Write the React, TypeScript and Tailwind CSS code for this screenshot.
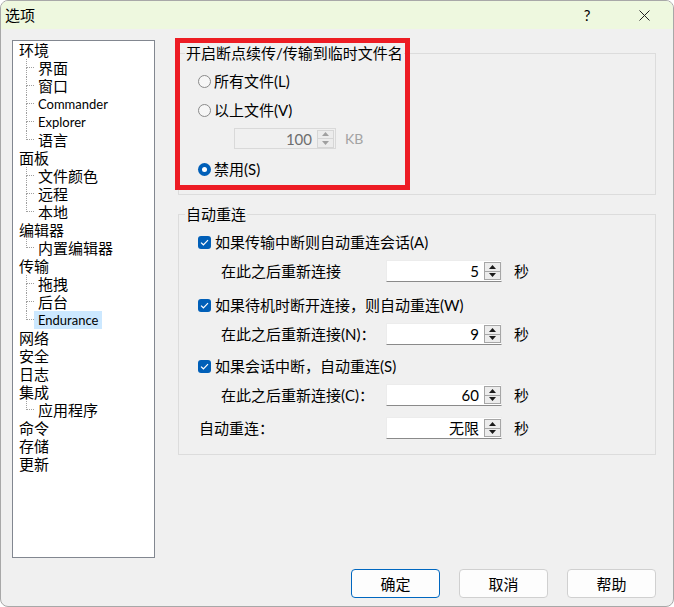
import React from "react";

type Node = { t: string; c?: string[] };

const tree: Node[] = [
  { t: "环境", c: ["界面", "窗口", "Commander", "Explorer", "语言"] },
  { t: "面板", c: ["文件颜色", "远程", "本地"] },
  { t: "编辑器", c: ["内置编辑器"] },
  { t: "传输", c: ["拖拽", "后台", "Endurance"] },
  { t: "网络" },
  { t: "安全" },
  { t: "日志" },
  { t: "集成", c: ["应用程序"] },
  { t: "命令" },
  { t: "存储" },
  { t: "更新" },
];

const latin = new Set(["Commander", "Explorer", "Endurance"]);

function Spinner({ disabled }: { disabled?: boolean }) {
  const border = disabled ? "border-[#d6d6d6]" : "border-[#a6a6a6]";
  const fill = disabled ? "#a0a0a0" : "#1a1a1a";
  return (
    <div className={`w-[17px] h-[18px] flex flex-col border ${border} bg-[#ececec]`}>
      <div className={`flex-1 flex items-center justify-center border-b ${border}`}>
        <svg width="7" height="4" viewBox="0 0 7 4">
          <path d="M0 4 L3.5 0 L7 4 Z" fill={fill} />
        </svg>
      </div>
      <div className="flex-1 flex items-center justify-center">
        <svg width="7" height="4" viewBox="0 0 7 4">
          <path d="M0 0 L7 0 L3.5 4 Z" fill={fill} />
        </svg>
      </div>
    </div>
  );
}

function Radio({ checked, label }: { checked?: boolean; label: string }) {
  return (
    <div className="h-[20px] flex items-center pl-[19px] gap-[3px]">
      {checked ? (
        <div className="w-[13px] h-[13px] rounded-full bg-[#005fb8] flex items-center justify-center">
          <div className="w-[5px] h-[5px] rounded-full bg-white" />
        </div>
      ) : (
        <div className="w-[13px] h-[13px] rounded-full border border-[#8a8a8a] bg-[#f6f6f6]" />
      )}
      <span>{label}</span>
    </div>
  );
}

function Check({ label }: { label: string }) {
  return (
    <div className="h-[20px] flex items-center pl-[19px] gap-[4px]">
      <div className="w-[13px] h-[13px] rounded-[3px] bg-[#005fb8] flex items-center justify-center">
        <svg width="9" height="7" viewBox="0 0 9 7">
          <path d="M1 3.6 L3.4 5.8 L8 1.2" stroke="white" strokeWidth="1.2" fill="none" />
        </svg>
      </div>
      <span>{label}</span>
    </div>
  );
}

function NumRow({ label, value, indent }: { label: string; value: string; indent: "deep" | "shallow" }) {
  return (
    <div className="h-[22px] flex items-center">
      <div className={`w-[207px] ${indent === "deep" ? "pl-[42px]" : "pl-[20px]"}`}>{label}</div>
      <div className="w-[116px] h-[22px] bg-white border border-[#ececec] border-b-[#8a8a8a] flex items-center justify-end">
        <span className="mr-[5px]">{value}</span>
        <Spinner />
      </div>
      <span className="ml-[12px]">秒</span>
    </div>
  );
}

function Tree() {
  const rows: React.ReactNode[] = [];
  tree.forEach((n) => {
    rows.push(
      <div key={n.t} className="h-[18px] flex items-center pl-[6px] leading-[18px]">
        {n.t}
      </div>
    );
    n.c?.forEach((c, i) => {
      const last = i === n.c!.length - 1;
      const sel = c === "Endurance";
      rows.push(
        <div key={n.t + c} className="h-[18px] flex pl-[13px] leading-[18px]">
          <div className="w-[8px] h-[18px] flex flex-col">
            <div className="h-[9px] border-l border-b border-dotted border-[#a0a0a0]" />
            <div className={last ? "flex-1" : "flex-1 border-l border-dotted border-[#a0a0a0]"} />
          </div>
          <span
            className={`px-[4px] h-[18px] ${latin.has(c) ? "text-[13px]" : ""} ${sel ? "bg-[#cce8ff]" : ""}`}
          >
            {c}
          </span>
        </div>
      );
    });
  });
  return (
    <div className="w-[143px] h-[518px] border border-[#828790] bg-white flex flex-col">{rows}</div>
  );
}

export default function App() {
  return (
    <div className="relative w-[674px] h-[607px] flex flex-col bg-[#f0f0f0] border border-[#a8a8a8] rounded-[8px] overflow-hidden text-[15px] leading-[20px] text-black font-['Lato','Noto_Sans_CJK_SC',sans-serif]">
      {/* title bar */}
      <div className="h-[28px] bg-[#eef8df] flex items-center pl-[4px]">
        <span className="leading-[20px]">选项</span>
        <div className="flex-1" />
        <span className="w-[10px] text-center mr-[47px] text-[15px]">?</span>
        <svg width="11" height="11" viewBox="0 0 11 11" className="mr-[23px]">
          <path d="M0.5 0.5 L10.5 10.5 M10.5 0.5 L0.5 10.5" stroke="#222" strokeWidth="1" />
        </svg>
      </div>

      {/* body */}
      <div className="flex flex-col flex-1">
        <div className="flex pt-[11px] pl-[11px]">
          <Tree />
          <div className="ml-[23px] w-[478px] mt-[3px] flex flex-col gap-[9px]">
            <fieldset className="border border-[#dcdcdc] pt-[8px] pb-[15px] flex flex-col">
              <legend className="ml-[6px] px-[1px] leading-[20px]">开启断点续传/传输到临时文件名</legend>
              <Radio label="所有文件(L)" />
              <div className="mt-[9px]">
                <Radio label="以上文件(V)" />
              </div>
              <div className="mt-[8px] h-[21px] flex items-center pl-[55px]">
                <div className="w-[102px] h-[21px] border border-[#d9d9d9] flex items-center justify-end pr-[1px]">
                  <span className="mr-[5px] text-[#6e6e6e]">100</span>
                  <Spinner disabled />
                </div>
                <span className="ml-[9px] text-[14px] text-[#a3a3a3]">KB</span>
              </div>
              <div className="mt-[10px]">
                <Radio checked label="禁用(S)" />
              </div>
            </fieldset>

            <fieldset className="border border-[#dcdcdc] pt-[8px] pb-[15px] flex flex-col">
              <legend className="ml-[6px] px-[1px] leading-[20px]">自动重连</legend>
              <Check label="如果传输中断则自动重连会话(A)" />
              <div className="mt-[8px]">
                <NumRow label="在此之后重新连接" value="5" indent="deep" />
              </div>
              <div className="mt-[13px]">
                <Check label="如果待机时断开连接，则自动重连(W)" />
              </div>
              <div className="mt-[8px]">
                <NumRow label="在此之后重新连接(N)：" value="9" indent="deep" />
              </div>
              <div className="mt-[11px]">
                <Check label="如果会话中断，自动重连(S)" />
              </div>
              <div className="mt-[8px]">
                <NumRow label="在此之后重新连接(C)：" value="60" indent="deep" />
              </div>
              <div className="mt-[11px]">
                <NumRow label="自动重连：" value="无限" indent="shallow" />
              </div>
            </fieldset>
          </div>
        </div>

        <div className="mt-[11px] flex justify-end pr-[17px] gap-[19px]">
          <button className="w-[89px] h-[29px] bg-[#fdfdfd] border border-[#0067c0] rounded-[4px] flex items-center justify-center">
            确定
          </button>
          <button className="w-[89px] h-[29px] bg-[#fdfdfd] border border-[#d0d0d0] rounded-[4px] flex items-center justify-center">
            取消
          </button>
          <button className="w-[89px] h-[29px] bg-[#fdfdfd] border border-[#d0d0d0] rounded-[4px] flex items-center justify-center">
            帮助
          </button>
        </div>
      </div>

      {/* red annotation overlay */}
      <div className="absolute left-[174px] top-[37px] w-[235px] h-[152px] border-[5px] border-[#ed1c24]" />
    </div>
  );
}
